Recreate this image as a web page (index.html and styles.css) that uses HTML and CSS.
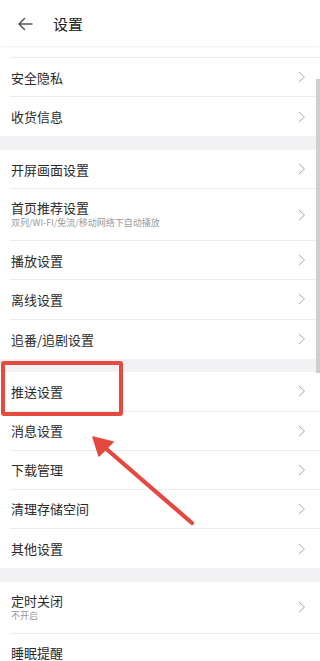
FILE: index.html
```html
<!DOCTYPE html>
<html lang="zh">
<head>
<meta charset="utf-8">
<title>设置</title>
<link rel="stylesheet" href="styles.css">
</head>
<body>
<div class="page">
  <header class="topbar">
    <svg class="back" width="16" height="14" viewBox="0 0 16 14"><path d="M15 7H2M7.5 1.5L2 7l5.5 5.5" fill="none" stroke="#555" stroke-width="1.5" stroke-linecap="round" stroke-linejoin="round"/></svg>
    <span class="title">设置</span>
  </header>

  <section class="group">
    <div class="row partial"></div>
    <div class="row"><span class="label">安全隐私</span><svg class="chev" viewBox="0 0 8 12"><path d="M1 1l5.5 5L1 11" /></svg></div>
    <div class="row last"><span class="label">收货信息</span><svg class="chev" viewBox="0 0 8 12"><path d="M1 1l5.5 5L1 11" /></svg></div>
  </section>
  <div class="gap"></div>
  <section class="group">
    <div class="row"><span class="label">开屏画面设置</span><svg class="chev" viewBox="0 0 8 12"><path d="M1 1l5.5 5L1 11" /></svg></div>
    <div class="row tall"><div class="text"><span class="label">首页推荐设置</span><span class="sub">双列/WI-FI/免流/移动网络下自动播放</span></div><svg class="chev" viewBox="0 0 8 12"><path d="M1 1l5.5 5L1 11" /></svg></div>
    <div class="row"><span class="label">播放设置</span><svg class="chev" viewBox="0 0 8 12"><path d="M1 1l5.5 5L1 11" /></svg></div>
    <div class="row"><span class="label">离线设置</span><svg class="chev" viewBox="0 0 8 12"><path d="M1 1l5.5 5L1 11" /></svg></div>
    <div class="row last"><span class="label">追番/追剧设置</span><svg class="chev" viewBox="0 0 8 12"><path d="M1 1l5.5 5L1 11" /></svg></div>
  </section>
  <div class="gap"></div>
  <section class="group">
    <div class="row"><span class="label">推送设置</span><svg class="chev" viewBox="0 0 8 12"><path d="M1 1l5.5 5L1 11" /></svg></div>
    <div class="row"><span class="label">消息设置</span><svg class="chev" viewBox="0 0 8 12"><path d="M1 1l5.5 5L1 11" /></svg></div>
    <div class="row"><span class="label">下载管理</span><svg class="chev" viewBox="0 0 8 12"><path d="M1 1l5.5 5L1 11" /></svg></div>
    <div class="row"><span class="label">清理存储空间</span><svg class="chev" viewBox="0 0 8 12"><path d="M1 1l5.5 5L1 11" /></svg></div>
    <div class="row last"><span class="label">其他设置</span><svg class="chev" viewBox="0 0 8 12"><path d="M1 1l5.5 5L1 11" /></svg></div>
  </section>
  <div class="gap"></div>
  <section class="group">
    <div class="row tall"><div class="text"><span class="label">定时关闭</span><span class="sub">不开启</span></div><svg class="chev" viewBox="0 0 8 12"><path d="M1 1l5.5 5L1 11" /></svg></div>
    <div class="row"><span class="label">睡眠提醒</span></div>
  </section>

  <div class="scrollbar"></div>
  <div class="highlight"></div>
  <svg class="pointer" width="320" height="661" viewBox="0 0 320 661">
    <line x1="192" y1="523" x2="103" y2="446" stroke="#e5483e" stroke-width="4.2" stroke-linecap="round"/>
    <polygon points="93,437 113,442 99,456" fill="#e5483e" stroke="#e5483e" stroke-width="1.5" stroke-linejoin="round"/>
  </svg>
</div>
</body>
</html>
```

FILE: styles.css
```css
html, body {
  margin: 0;
  padding: 0;
  background: #ffffff;
}
body {
  font-family: "Noto Sans CJK SC", "Noto Sans", sans-serif;
  color: #333333;
}
.page {
  position: relative;
  width: 320px;
  height: 661px;
  overflow: hidden;
  background: #ffffff;
}
.topbar {
  height: 46px;
  display: flex;
  align-items: center;
  padding-left: 17px;
  background: #ffffff;
  box-shadow: 0 1px 2px rgba(0, 0, 0, 0.07);
  position: relative;
  z-index: 1;
}
.back {
  display: block;
  margin-top: 1px;
}
.title {
  margin-left: 20px;
  font-size: 15px;
  color: #222222;
  line-height: 1;
  margin-top: 1px;
}
.group {
  background: #ffffff;
}
.gap {
  height: 13.6px;
  background: #f2f2f4;
}
.row {
  box-sizing: border-box;
  height: 39.2px;
  margin-left: 10px;
  padding-left: 1px;
  padding-right: 14px;
  border-bottom: 1px solid #ececec;
  display: flex;
  align-items: center;
  justify-content: space-between;
}
.row.partial {
  height: 12px;
}
.row.tall {
  height: 52px;
}
.row.last {
  border-bottom: none;
}
.label {
  display: block;
  font-size: 13px;
  line-height: 15px;
  color: #2b2b2b;
}
.text {
  display: flex;
  flex-direction: column;
  gap: 2px;
  margin-top: -1px;
}
.sub {
  display: block;
  font-size: 9px;
  line-height: 11px;
  color: #9a9a9a;
}
.chev {
  width: 8px;
  height: 12px;
  fill: none;
  stroke: #a8a8a8;
  stroke-width: 1;
  flex: none;
}
.scrollbar {
  position: absolute;
  right: 0;
  top: 79px;
  width: 4px;
  height: 294px;
  background: #cfcfcf;
}
.highlight {
  position: absolute;
  left: 1px;
  top: 361px;
  width: 122px;
  height: 55px;
  box-sizing: border-box;
  border: 4px solid #e64a3f;
  border-radius: 3px;
}
.pointer {
  position: absolute;
  left: 0;
  top: 0;
  pointer-events: none;
}
```
